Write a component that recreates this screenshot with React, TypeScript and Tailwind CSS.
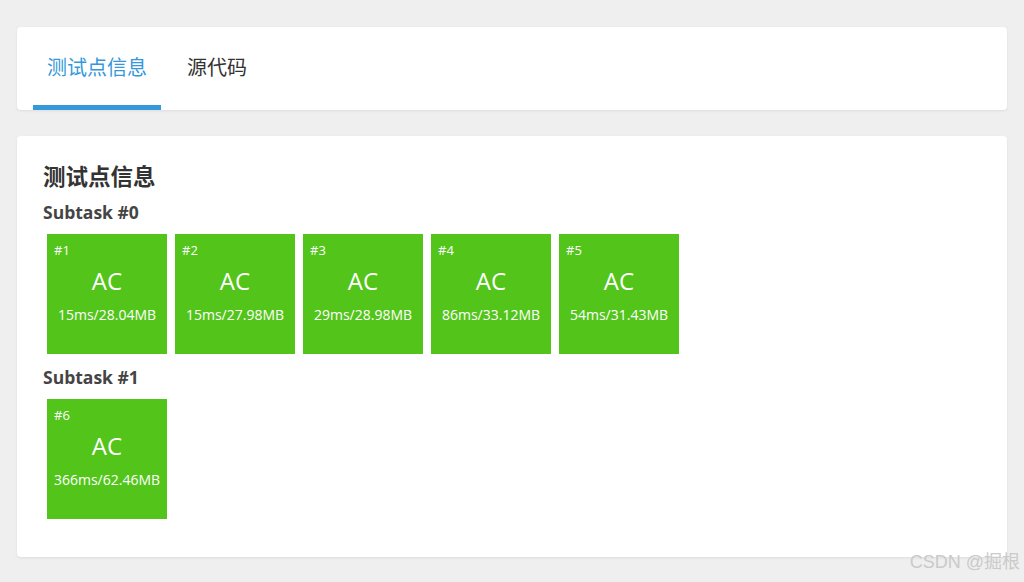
const font = { fontFamily: '"Open Sans", "Noto Sans CJK SC", sans-serif' };

interface Case {
  id: number;
  status: string;
  time: string;
  mem: string;
}

const subtasks: { name: string; cases: Case[] }[] = [
  {
    name: 'Subtask #0',
    cases: [
      { id: 1, status: 'AC', time: '15ms', mem: '28.04MB' },
      { id: 2, status: 'AC', time: '15ms', mem: '27.98MB' },
      { id: 3, status: 'AC', time: '29ms', mem: '28.98MB' },
      { id: 4, status: 'AC', time: '86ms', mem: '33.12MB' },
      { id: 5, status: 'AC', time: '54ms', mem: '31.43MB' },
    ],
  },
  {
    name: 'Subtask #1',
    cases: [{ id: 6, status: 'AC', time: '366ms', mem: '62.46MB' }],
  },
];

function CaseBox({ c }: { c: Case }) {
  return (
    <div className="relative m-1 flex h-[120px] w-[120px] flex-col items-center bg-[#52c41a] text-white">
      <div className="absolute left-[7px] top-[7px] text-[13px] leading-[18px]">#{c.id}</div>
      <div className="mt-[30px] text-[24px] leading-[34px]">{c.status}</div>
      <div className="mt-[7px] whitespace-nowrap text-[14px] leading-[20px]">
        {c.time}/{c.mem}
      </div>
    </div>
  );
}

export default function App() {
  return (
    <div className="relative min-h-[582px] bg-[#efefef] px-[17px] pt-[27px] pb-6" style={font}>
      {/* Tabs */}
      <div className="flex h-[83px] items-stretch rounded bg-white px-4 shadow-[0_1px_3px_rgba(0,0,0,0.08)]">
        <div className="flex items-center border-b-[5px] border-[#3498db] px-[14px] pt-[4px] text-[20px] text-[#3498db]">
          测试点信息
        </div>
        <div className="flex items-center border-b-[5px] border-transparent px-[26px] pt-[4px] text-[20px] text-[#333]">
          源代码
        </div>
      </div>

      {/* Test case info */}
      <div className="mt-[26px] rounded bg-white px-[26px] pt-[24px] pb-[34px] shadow-[0_1px_3px_rgba(0,0,0,0.08)]">
        <h2 className="text-[22.5px] font-bold leading-[33px] text-[#333]">测试点信息</h2>
        {subtasks.map((s) => (
          <div key={s.name}>
            <h3 className="mt-[7px] mb-[6px] text-[17.5px] font-bold leading-[24px] text-[#444]">{s.name}</h3>
            <div className="flex flex-wrap">
              {s.cases.map((c) => (
                <CaseBox key={c.id} c={c} />
              ))}
            </div>
          </div>
        ))}
      </div>

      <div
        className="absolute bottom-[6px] right-[4px] text-[18px] font-normal text-[#cacaca]"
        style={{ fontFamily: '"Liberation Sans", "Noto Sans CJK SC", sans-serif' }}
      >
        CSDN @掘根
      </div>
    </div>
  );
}
